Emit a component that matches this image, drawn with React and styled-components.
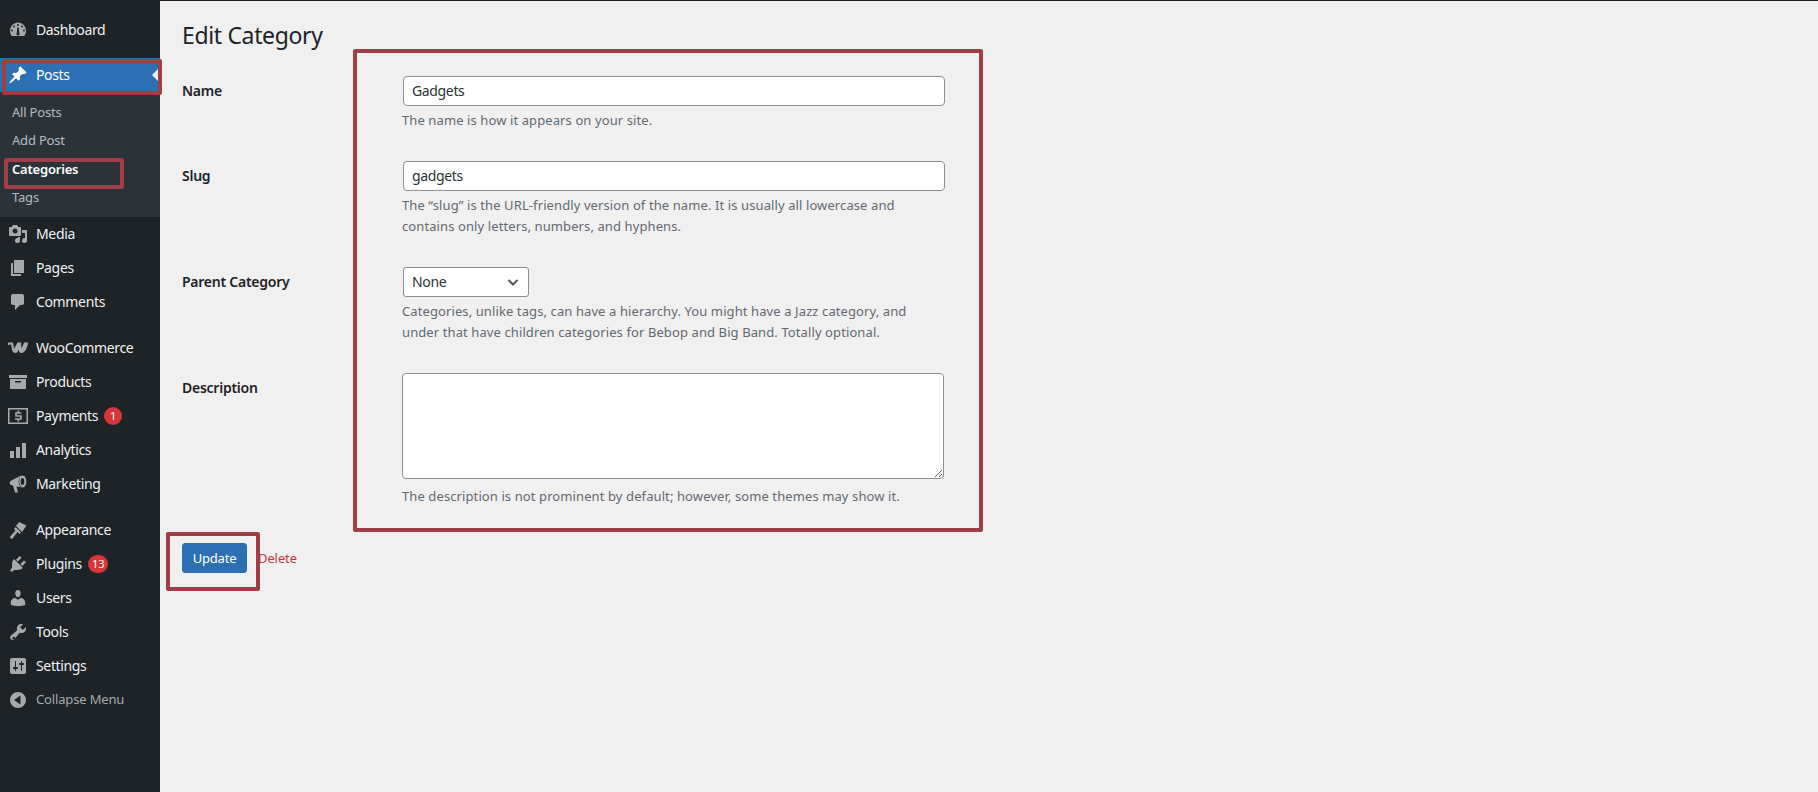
import React from "react";
import styled, { createGlobalStyle } from "styled-components";

const Global = createGlobalStyle`
  html, body { margin: 0; padding: 0; background: #f0f0f1; }
  body { font-family: "Noto Sans", "Open Sans", sans-serif; font-size: 13px; color: #1d2327; }
`;

const Page = styled.div`
  position: relative; display: flex; width: 1818px; height: 792px; overflow: hidden;
  background: #f0f0f1; border-top: 1px solid #1d2327; box-sizing: border-box;
`;
const Sidebar = styled.nav`
  width: 160px; flex: none; background: #1d2327; padding-top: 12px; box-sizing: border-box;
`;
const Group = styled.div`
  margin-bottom: ${p => p.$gap}px;
`;
const Item = styled.div`
  position: relative; display: flex; align-items: center; height: 34px;
  color: ${p => p.$muted ? "#a7aaad" : p.$active ? "#fff" : "#f0f0f1"};
  background: ${p => p.$active ? "#2d6fb3" : "transparent"};
  font-size: ${p => p.$small ? 13 : 14}px;
  letter-spacing: ${p => p.$small ? -0.15 : -0.35}px;
`;
const ItemLabel = styled.span`
  padding-bottom: 2px;
`;
const IconSlot = styled.span`
  width: 36px; flex: none; display: flex; justify-content: center;
  color: ${p => p.$active ? "#fff" : "#a7aaad"};
  svg { width: 20px; height: 20px; fill: currentColor; display: block; }
`;
const Arrow = styled.span`
  position: absolute; right: 0; top: 9px; width: 0; height: 0;
  border: 8px solid transparent; border-right-color: #f0f0f1; border-left: 0;
`;
const Badge = styled.span`
  display: inline-block; margin-left: 6px; min-width: 18px; height: 18px; line-height: 18px; padding: 0 ${p => p.$wide ? 4 : 0}px;
  box-sizing: border-box; border-radius: 9px; background: #d63638; color: #fff; font-size: 11px; text-align: center; letter-spacing: 0;
`;
const Submenu = styled.div`
  background: #2c3338; padding: 7px 0 0; height: 125px; box-sizing: border-box;
`;
const SubItem = styled.div`
  height: 28.4px; line-height: 26px; padding-left: 12px; font-size: 13px; letter-spacing: -0.2px;
  color: ${p => p.$current ? "#fff" : "rgba(240,246,252,.7)"};
  font-weight: ${p => p.$current ? 600 : 400};
`;
const Main = styled.main`
  flex: 1; padding: 19px 0 0 22px; min-width: 0;
`;
const Title = styled.h1`
  margin: 0 0 26px; font-size: 23px; font-weight: 400; line-height: 30px; color: #1d2327; letter-spacing: -0.35px;
`;
const Row = styled.div`
  display: grid; grid-template-columns: 220px 1fr; margin-bottom: ${p => p.$mb}px;
`;
const Label = styled.label`
  font-size: 14px; font-weight: 600; color: #1d2327; line-height: 18px; padding-top: 6px; letter-spacing: -0.25px;
`;
const Field = styled.div`
  width: 543px;
`;
const TextInput = styled.input`
  display: block; box-sizing: border-box; width: 542px; height: 30px; padding: 0 8px 2px; margin: 0 0 0 1px;
  font: 14px "Noto Sans", sans-serif; letter-spacing: -0.35px; color: #2c3338; background: #fff; border: 1px solid #8c8f94; border-radius: 4px;
`;
const SelectBox = styled.div`
  box-sizing: border-box; width: 126px; height: 30px; margin-left: 1px; padding: 0 8px 2px; display: flex; align-items: center; justify-content: space-between;
  font-size: 14px; letter-spacing: -0.35px; color: #2c3338; background: #fff; border: 1px solid #8c8f94; border-radius: 3px;
  svg { width: 14px; height: 14px; margin: 2px 0 0 0; }
`;
const TextArea = styled.textarea`
  display: block; box-sizing: border-box; width: 542px; height: 106px; padding: 2px 6px; margin: 0;
  background: #fff; border: 1px solid #8c8f94; border-radius: 4px;
`;
const Help = styled.p`
  margin: ${p => p.$mt}px 0 0; font-size: 13px; line-height: 21.5px; color: #646970; letter-spacing: 0.1px;
`;
const Actions = styled.div`
  display: flex; align-items: center; gap: 11px;
`;
const Update = styled.button`
  box-sizing: border-box; width: 65px; height: 30px; padding: 0 0 1px; font: 13px "Noto Sans", sans-serif; letter-spacing: -0.2px;
  background: #2d6fb3; color: #fff; border: 1px solid #2d6fb3; border-radius: 3px;
`;
const DeleteLink = styled.a`
  color: #d0313a; font-size: 13px; letter-spacing: -0.1px;
`;
const Annot = styled.div`
  position: absolute; box-sizing: border-box; border: 4px solid #a03e47; border-radius: 2px; pointer-events: none;
`;

const P = ({ d, rule }) => <svg viewBox="0 0 20 20"><path d={d} fillRule={rule} /></svg>;
const icons = {
  dashboard: <P rule="evenodd" d="M3.76 16h12.48C17.34 14.57 18 12.79 18 10.86 18 6.2 14.42 2.4 10 2.4S2 6.2 2 10.86c0 1.93.66 3.71 1.76 5.14zM10 4a1 1 0 110 2 1 1 0 010-2zM6 5.5a1 1 0 110 2 1 1 0 010-2zm8 0a1 1 0 110 2 1 1 0 010-2zM4 9.5a1 1 0 110 2 1 1 0 010-2zm12 0a1 1 0 110 2 1 1 0 010-2zM9.3 7.5h1.4l.5 5.2a1.6 1.6 0 11-2.4 0z" />,
  pin: <P d="M10.44 3.02l1.82-1.82 6.36 6.35-1.83 1.82c-1.05-.68-2.48-.57-3.41.36l-.75.75c-.92.93-1.04 2.35-.35 3.41l-1.83 1.82-2.41-2.41-2.8 2.79c-.42.42-3.38 2.71-3.8 2.29s1.86-3.39 2.28-3.81l2.79-2.79L4.1 9.36l1.83-1.82c1.05.69 2.48.57 3.4-.36l.75-.75c.93-.92 1.05-2.35.36-3.41z" />,
  media: <P rule="evenodd" d="M13 11V4c0-.55-.45-1-1-1h-1.67L9 1H5L3.67 3H2c-.55 0-1 .45-1 1v7c0 .55.45 1 1 1h10c.55 0 1-.45 1-1zM7 4.5a2.5 2.5 0 110 5 2.5 2.5 0 010-5zM14 6h5v10.5a2.5 2.5 0 11-2-2.45V9h-3V6zm-4 8.05V13h2v3.5a2.5 2.5 0 11-2-2.45z" />,
  pages: <P d="M6 15V2h10v13H6zm-1 1h8v2H3V5h2v11z" />,
  comments: <P d="M5 2h9c1.1 0 2 .9 2 2v7c0 1.1-.9 2-2 2h-2l-5 5v-5H5c-1.1 0-2-.9-2-2V4c0-1.1.9-2 2-2z" />,
  woo: <P d="M0 4.500h5l1 6.500 3.500-6.500H13l.6 6 2.500-6H20c-.5 5-3 10.500-6.500 10.500-1.800 0-2.600-1-2.800-3.500-1 2.500-2 3.500-3.500 3.500-2.500 0-3.500-3-4-8.500L0 7z" />,
  products: <P rule="evenodd" d="M1 3h18v3H1zM2 7h16v10H2zM7 9v1.500h6V9z" />,
  payments: (
    <svg viewBox="0 0 20 20">
      <path fillRule="evenodd" d="M0 2h20v16H0zM1.500 3.500v13h17v-13z" />
      <path fill="none" stroke="currentColor" strokeWidth="1.600" d="M13.500 7H8v3h5v3H7M10.300 4.500V7M10.300 13v2.500" />
    </svg>
  ),
  analytics: <P d="M2 11h4v7H2zM8 7h4v11H8zM14 3h4v15h-4z" />,
  marketing: <P rule="evenodd" d="M13 1.500L2.500 7C1.500 7.500 1.200 10 2.500 10.800L5 11.600 7 18.500h3L8.500 12.500 14 13.500C10.500 11 10.500 4 13 1.500zM14.500 1.500c-2.500 0-3.800 3-3.800 6s1.300 6 3.800 6 3.800-3 3.800-6-1.300-6-3.800-6zM14.500 4c1.200 0 1.800 1.600 1.800 3.500s-.6 3.500-1.800 3.500-1.800-1.600-1.800-3.500.6-3.500 1.800-3.500z" />,
  appearance: <P d="M11 2l7.500 3.500L14 12 8 6zM7.500 7l5.500 5.500-1.500 1.500-2-2-5 6.500c-1 1-3-.5-2.300-2l5.300-6L6 9z" />,
  plugins: <P d="M13.11 4.36L9.87 7.6 8 5.73l3.24-3.24c.35-.34 1.05-.2 1.56.32.52.51.66 1.21.31 1.55zm-8 1.77l.91-1.12 9.01 9.01-1.19.84c-.71.71-2.63 1.16-3.82 1.16H6.14L4.9 17.26c-.59.59-1.54.59-2.12 0-.59-.58-.59-1.53 0-2.12l1.24-1.24v-3.88c0-1.13.4-3.19 1.09-3.89zm7.26 3.97l3.24-3.24c.34-.35 1.04-.21 1.55.31.52.51.66 1.21.32 1.55l-3.24 3.25z" />,
  users: <P d="M10 9.25c-2.27 0-2.73-3.44-2.73-3.44C7 4.02 7.82 2 9.97 2c2.16 0 2.98 2.02 2.71 3.81 0 0-.41 3.44-2.68 3.44zm0 2.57L12.72 10c2.39 0 4.52 2.33 4.52 4.53v2.49s-3.65 1.13-7.24 1.13c-3.65 0-7.24-1.13-7.24-1.13v-2.49c0-2.25 1.94-4.48 4.47-4.48z" />,
  tools: <P rule="evenodd" d="M16.68 9.77c-1.34 1.34-3.3 1.67-4.95.99l-5.41 6.52c-.99.99-2.59.99-3.57 0-.99-.98-.99-2.58 0-3.57l6.52-5.42c-.68-1.65-.35-3.61.99-4.95 1.28-1.28 3.12-1.62 4.72-1.06l-2.89 2.89 2.82 2.82 2.86-2.87c.53 1.58.18 3.4-1.09 4.67zM4.86 17.32c.57.57 1.5.57 2.07 0s.57-1.5 0-2.07-1.5-.57-2.07 0-.57 1.5 0 2.07z" />,
  settings: <P rule="evenodd" d="M18 16V4c0-1.1-.9-2-2-2H4c-1.1 0-2 .9-2 2v12c0 1.1.9 2 2 2h12c1.1 0 2-.9 2-2zM8 11h1c.55 0 1 .45 1 1s-.45 1-1 1H8v1.5c0 .28-.22.5-.5.5s-.5-.22-.5-.5V13H6c-.55 0-1-.45-1-1s.45-1 1-1h1V5.500c0-.28.22-.5.5-.5s.5.22.5.5V11zm5-2h-1c-.55 0-1-.45-1-1s.45-1 1-1h1V5.500c0-.28.22-.5.5-.5s.5.22.5.5V7h1c.55 0 1 .45 1 1s-.45 1-1 1h-1v5.500c0 .28-.22.5-.5.5s-.5-.22-.5-.5V9z" />,
  collapse: <P rule="evenodd" d="M18 10a8 8 0 10-16 0 8 8 0 0016 0zm-5.500 4.500L6 10l6.500-4.500z" />,
};

const MenuItem = ({ icon, label, active, muted, children }) => (
  <Item $active={active} $muted={muted} $small={muted}>
    <IconSlot $active={active}>{icons[icon]}</IconSlot>
    <ItemLabel>{label}</ItemLabel>
    {children}
  </Item>
);

export default function App() {
  return (
    <>
      <Global />
      <Page>
        <Sidebar>
          <Group $gap={11}><MenuItem icon="dashboard" label="Dashboard" /></Group>
          <MenuItem icon="pin" label="Posts" active><Arrow /></MenuItem>
          <Submenu>
            <SubItem>All Posts</SubItem>
            <SubItem>Add Post</SubItem>
            <SubItem $current>Categories</SubItem>
            <SubItem>Tags</SubItem>
          </Submenu>
          <Group $gap={12}>
            <MenuItem icon="media" label="Media" />
            <MenuItem icon="pages" label="Pages" />
            <MenuItem icon="comments" label="Comments" />
          </Group>
          <Group $gap={12}>
            <MenuItem icon="woo" label="WooCommerce" />
            <MenuItem icon="products" label="Products" />
            <MenuItem icon="payments" label="Payments"><Badge>1</Badge></MenuItem>
            <MenuItem icon="analytics" label="Analytics" />
            <MenuItem icon="marketing" label="Marketing" />
          </Group>
          <Group $gap={0}>
            <MenuItem icon="appearance" label="Appearance" />
            <MenuItem icon="plugins" label="Plugins"><Badge $wide>13</Badge></MenuItem>
            <MenuItem icon="users" label="Users" />
            <MenuItem icon="tools" label="Tools" />
            <MenuItem icon="settings" label="Settings" />
            <MenuItem icon="collapse" label="Collapse Menu" muted />
          </Group>
        </Sidebar>
        <Main>
          <Title>Edit Category</Title>
          <Row $mb={30}>
            <Label>Name</Label>
            <Field>
              <TextInput readOnly value="Gadgets" />
              <Help $mt={3.5}>The name is how it appears on your site.</Help>
            </Field>
          </Row>
          <Row $mb={29.5}>
            <Label>Slug</Label>
            <Field>
              <TextInput readOnly value="gadgets" />
              <Help $mt={3.5}>The “slug” is the URL-friendly version of the name. It is usually all lowercase and<br />contains only letters, numbers, and hyphens.</Help>
            </Field>
          </Row>
          <Row $mb={29.5}>
            <Label>Parent Category</Label>
            <Field>
              <SelectBox>None
                <svg viewBox="0 0 14 14" fill="none" stroke="#50575e" strokeWidth="2"><path d="M2.500 5l4.500 4.500L11.500 5" /></svg>
              </SelectBox>
              <Help $mt={3.5}>Categories, unlike tags, can have a hierarchy. You might have a Jazz category, and<br />under that have children categories for Bebop and Big Band. Totally optional.</Help>
            </Field>
          </Row>
          <Row $mb={35.5}>
            <Label>Description</Label>
            <Field>
              <TextArea readOnly />
              <Help $mt={7}>The description is not prominent by default; however, some themes may show it.</Help>
            </Field>
          </Row>
          <Actions>
            <Update>Update</Update>
            <DeleteLink>Delete</DeleteLink>
          </Actions>
        </Main>
        <Annot style={{ left: 353, top: 48, width: 630, height: 483 }} />
        <Annot style={{ left: 166, top: 531, width: 94, height: 59 }} />
        <Annot style={{ left: 2, top: 58, width: 160, height: 36 }} />
        <Annot style={{ left: 4, top: 157, width: 120, height: 31 }} />
      </Page>
    </>
  );
}
